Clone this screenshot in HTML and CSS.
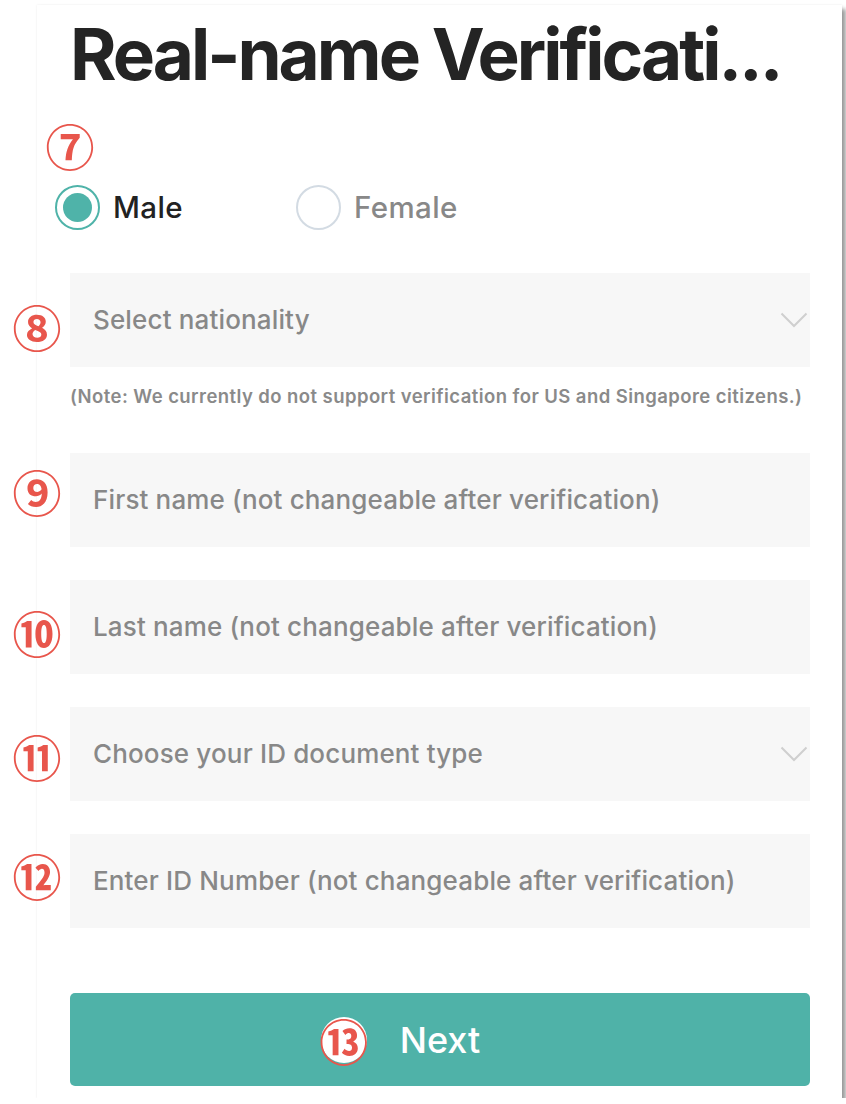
FILE: index.html
```html
<!DOCTYPE html>
<html lang="en">
<head>
<meta charset="utf-8">
<title>Real-name Verification</title>
<link rel="stylesheet" href="styles.css">
</head>
<body>
<div class="card">
  <h1 class="title">Real-name Verificati...</h1>
  <div class="mark-row"><span class="mark">⑦</span></div>
  <div class="gender">
    <label class="radio radio-on"><span class="radio-ring"><span class="radio-dot"></span></span><span class="radio-label">Male</span></label>
    <label class="radio"><span class="radio-ring"></span><span class="radio-label">Female</span></label>
  </div>

  <div class="field field-nat">
    <span class="mark side m8">⑧</span>
    <span class="ph">Select nationality</span>
    <svg class="chev" width="28" height="17" viewBox="0 0 28 17"><path d="M1.5 1.5 L14 14 L26.5 1.5" fill="none" stroke="#cfcfcf" stroke-width="2"/></svg>
  </div>
  <p class="note">(Note: We currently do not support verification for US and Singapore citizens.)</p>

  <div class="fields">
    <div class="field">
      <span class="mark side m9">⑨</span>
      <span class="ph">First name (not changeable after verification)</span>
    </div>
    <div class="field">
      <span class="mark side m10">⑩</span>
      <span class="ph">Last name (not changeable after verification)</span>
    </div>
    <div class="field">
      <span class="mark side m11">⑪</span>
      <span class="ph">Choose your ID document type</span>
      <svg class="chev" width="28" height="17" viewBox="0 0 28 17"><path d="M1.5 1.5 L14 14 L26.5 1.5" fill="none" stroke="#cfcfcf" stroke-width="2"/></svg>
    </div>
    <div class="field">
      <span class="mark side m12">⑫</span>
      <span class="ph">Enter ID Number (not changeable after verification)</span>
    </div>
  </div>

  <button class="next"><span class="next-text"><span class="mark btn-mark">⑬</span>Next</span></button>
</div>
</body>
</html>
```
FILE: styles.css
```css
html, body {
  margin: 0;
  padding: 0;
  background: #ffffff;
}

body {
  font-family: Inter, "Liberation Sans", sans-serif;
  overflow: hidden;
}

.card {
  box-sizing: border-box;
  margin: 5px 0 0 37px;
  width: 805px;
  height: 1093px;
  padding: 0 32px 0 33px;
  background: #ffffff;
  box-shadow: 4px 4px 4px rgba(0, 0, 0, 0.38), 0 0 2px rgba(0, 0, 0, 0.08);
}

.title {
  margin: 0;
  padding-top: 4px;
  font-size: 71px;
  line-height: 90px;
  font-weight: 700;
  color: #242424;
  letter-spacing: -3px;
  white-space: nowrap;
}

.mark {
  display: inline-flex;
  align-items: center;
  justify-content: center;
  width: 46px;
  height: 46px;
  font-family: "Noto Sans CJK JP", "DejaVu Sans", sans-serif;
  font-size: 49px;
  font-weight: 700;
  line-height: 46px;
  color: #e8564c;
}

.mark-row {
  margin-top: 23px;
  height: 46px;
  margin-left: -23px;
}

.gender {
  margin-top: 16px;
  margin-left: -15px;
  height: 46px;
  display: grid;
  grid-template-columns: 241px auto;
  align-items: center;
}

.radio {
  display: flex;
  align-items: center;
  gap: 13px;
}

.radio-ring {
  box-sizing: border-box;
  width: 45px;
  height: 45px;
  border-radius: 50%;
  border: 2px solid #d3dbe3;
  display: flex;
  align-items: center;
  justify-content: center;
}

.radio-on .radio-ring {
  border-color: #4fb3a9;
}

.radio-dot {
  width: 29px;
  height: 29px;
  border-radius: 50%;
  background: #4fb3a9;
}

.radio-label {
  font-size: 29.5px;
  font-weight: 500;
  color: #888888;
  letter-spacing: 0.4px;
}

.radio-on .radio-label {
  color: #222222;
}

.field {
  position: relative;
  box-sizing: border-box;
  height: 94px;
  background: #f7f7f7;
  display: flex;
  align-items: center;
  justify-content: space-between;
  padding: 0 2px 0 23px;
}

.field-nat {
  margin-top: 43px;
}

.ph {
  font-size: 26px;
  font-weight: 500;
  color: #888888;
  letter-spacing: 0.15px;
  position: relative;
  top: -1px;
}

.chev {
  display: block;
}

.side {
  position: absolute;
  left: -56px;
  top: 24px;
}

.m8 { top: 30px; }
.m9 { top: 15px; }
.m10 { top: 29px; }
.m11 { top: 26px; }
.m12 { top: 18px; }

.note {
  margin: 19px 0 0;
  font-size: 18.5px;
  line-height: 20px;
  font-weight: 600;
  color: #8a8a8a;
  letter-spacing: 0.43px;
  white-space: nowrap;
}

.fields {
  margin-top: 47px;
  display: flex;
  flex-direction: column;
  gap: 33px;
}

.next {
  margin-top: 65px;
  width: 100%;
  height: 93px;
  border: none;
  border-radius: 5px;
  background: #4fb2a8;
  color: #ffffff;
  font-family: Inter, "Liberation Sans", sans-serif;
  font-size: 36px;
  font-weight: 500;
  display: flex;
  align-items: center;
  justify-content: center;
  padding: 0;
}

.next-text {
  position: relative;
}

.btn-mark {
  position: absolute;
  left: -79px;
  top: 50%;
  margin-top: -23px;
  background: #ffffff;
  border-radius: 50%;
}
```
